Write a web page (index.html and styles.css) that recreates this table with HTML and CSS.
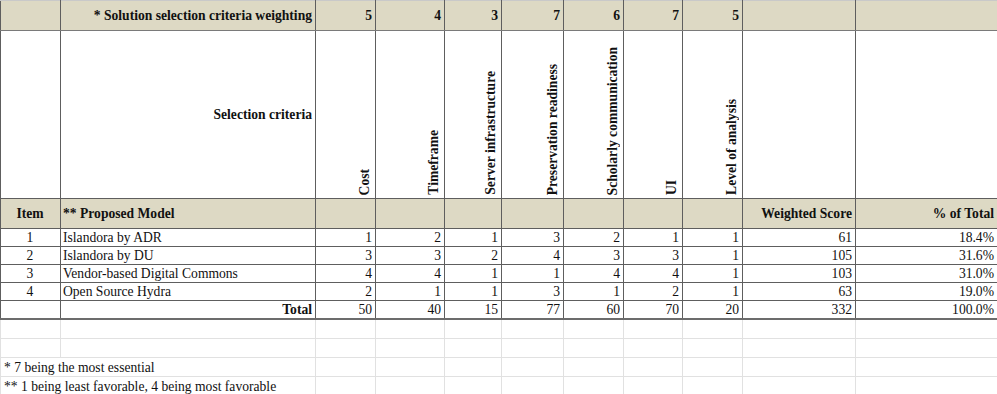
FILE: index.html
```html
<!DOCTYPE html>
<html>
<head>
<meta charset="utf-8">
<link rel="stylesheet" href="styles.css">
</head>
<body>
<table class="sheet">
  <colgroup>
    <col class="c-item"><col class="c-name"><col class="c-cost"><col class="c-time"><col class="c-serv"><col class="c-pres"><col class="c-schol"><col class="c-ui"><col class="c-level"><col class="c-score"><col class="c-pct">
  </colgroup>
  <tr class="r-weight tan">
    <td></td>
    <td class="right bold">* Solution selection criteria weighting</td>
    <td class="num bold">5</td>
    <td class="num bold">4</td>
    <td class="num bold">3</td>
    <td class="num bold">7</td>
    <td class="num bold">6</td>
    <td class="num bold">7</td>
    <td class="num bold">5</td>
    <td></td>
    <td></td>
  </tr>
  <tr class="r-criteria">
    <td></td>
    <td class="right bold">Selection criteria</td>
    <td class="rot-cell"><div class="rot">Cost</div></td>
    <td class="rot-cell"><div class="rot">Timeframe</div></td>
    <td class="rot-cell"><div class="rot">Server infrastructure</div></td>
    <td class="rot-cell"><div class="rot">Preservation readiness</div></td>
    <td class="rot-cell"><div class="rot">Scholarly communication</div></td>
    <td class="rot-cell"><div class="rot">UI</div></td>
    <td class="rot-cell"><div class="rot">Level of analysis</div></td>
    <td></td>
    <td></td>
  </tr>
  <tr class="r-head tan">
    <td class="center bold">Item</td>
    <td class="bold">** Proposed Model</td>
    <td></td><td></td><td></td><td></td><td></td><td></td><td></td>
    <td class="num bold">Weighted Score</td>
    <td class="num bold">% of Total</td>
  </tr>
  <tr class="r-data">
    <td class="center">1</td><td>Islandora by ADR</td>
    <td class="num">1</td><td class="num">2</td><td class="num">1</td><td class="num">3</td><td class="num">2</td><td class="num">1</td><td class="num">1</td>
    <td class="num">61</td><td class="num">18.4%</td>
  </tr>
  <tr class="r-data">
    <td class="center">2</td><td>Islandora by DU</td>
    <td class="num">3</td><td class="num">3</td><td class="num">2</td><td class="num">4</td><td class="num">3</td><td class="num">3</td><td class="num">1</td>
    <td class="num">105</td><td class="num">31.6%</td>
  </tr>
  <tr class="r-data">
    <td class="center">3</td><td>Vendor-based Digital Commons</td>
    <td class="num">4</td><td class="num">4</td><td class="num">1</td><td class="num">1</td><td class="num">4</td><td class="num">4</td><td class="num">1</td>
    <td class="num">103</td><td class="num">31.0%</td>
  </tr>
  <tr class="r-data">
    <td class="center">4</td><td>Open Source Hydra</td>
    <td class="num">2</td><td class="num">1</td><td class="num">1</td><td class="num">3</td><td class="num">1</td><td class="num">2</td><td class="num">1</td>
    <td class="num">63</td><td class="num">19.0%</td>
  </tr>
  <tr class="r-total">
    <td></td><td class="right bold">Total</td>
    <td class="num">50</td><td class="num">40</td><td class="num">15</td><td class="num">77</td><td class="num">60</td><td class="num">70</td><td class="num">20</td>
    <td class="num">332</td><td class="num">100.0%</td>
  </tr>
  <tr class="r-blank">
    <td></td><td></td><td></td><td></td><td></td><td></td><td></td><td></td><td></td><td></td><td></td>
  </tr>
  <tr class="r-blank">
    <td></td><td></td><td></td><td></td><td></td><td></td><td></td><td></td><td></td><td></td><td></td>
  </tr>
  <tr class="r-blank">
    <td colspan="2" class="note">* 7 being the most essential</td><td></td><td></td><td></td><td></td><td></td><td></td><td></td><td></td><td></td>
  </tr>
  <tr class="r-blank">
    <td colspan="2" class="note">** 1 being least favorable, 4 being most favorable</td><td></td><td></td><td></td><td></td><td></td><td></td><td></td><td></td><td></td>
  </tr>
</table>
</body>
</html>
```

FILE: styles.css
```css
html, body {
  margin: 0;
  padding: 0;
  background: #ffffff;
}

body {
  font-family: "Liberation Serif", "Times New Roman", serif;
  font-size: 13.6px;
  color: #111111;
  overflow: hidden;
}

.sheet {
  border-collapse: collapse;
  table-layout: fixed;
  width: 998px;
}

.c-item { width: 60px; }
.c-name { width: 255px; }
.c-cost { width: 60px; }
.c-time { width: 69px; }
.c-serv { width: 57px; }
.c-pres { width: 62px; }
.c-schol { width: 60px; }
.c-ui { width: 59px; }
.c-level { width: 60px; }
.c-score { width: 113px; }
.c-pct { width: 142px; }

.sheet td {
  padding: 0 3px 0 2px;
  border: 1px solid #e1e1e1;
  white-space: nowrap;
  overflow: visible;
  line-height: 16px;
  vertical-align: middle;
}

.r-weight td,
.r-criteria td,
.r-head td,
.r-data td,
.r-total td {
  border-color: #5e5e5e;
}

.r-weight td {
  border-top-color: #c9c9c9;
  border-bottom-color: #7a7a7a;
  height: 29px;
}

.r-criteria td {
  height: 164px;
}

.r-head td {
  height: 29px;
}

.r-data td {
  height: 17px;
}

.r-total td {
  height: 17px;
  border-bottom: 2px solid #6c6c6c;
}

.r-blank td {
  height: 18px;
}

.sheet .note {
  padding-left: 3px;
  vertical-align: bottom;
  padding-bottom: 0;
}

.tan td {
  background: #ddd9c4;
}

.bold {
  font-weight: bold;
}

.right {
  text-align: right;
}

.center {
  text-align: center;
}

.num {
  text-align: right;
}

.sheet .rot-cell {
  vertical-align: bottom;
  text-align: right;
  padding: 0 3px 3px 0;
  line-height: 0;
  font-size: 0;
}

.rot {
  display: inline-block;
  vertical-align: bottom;
  writing-mode: vertical-rl;
  transform: rotate(180deg);
  font-weight: bold;
  font-size: 13.6px;
  line-height: 15px;
}
```
